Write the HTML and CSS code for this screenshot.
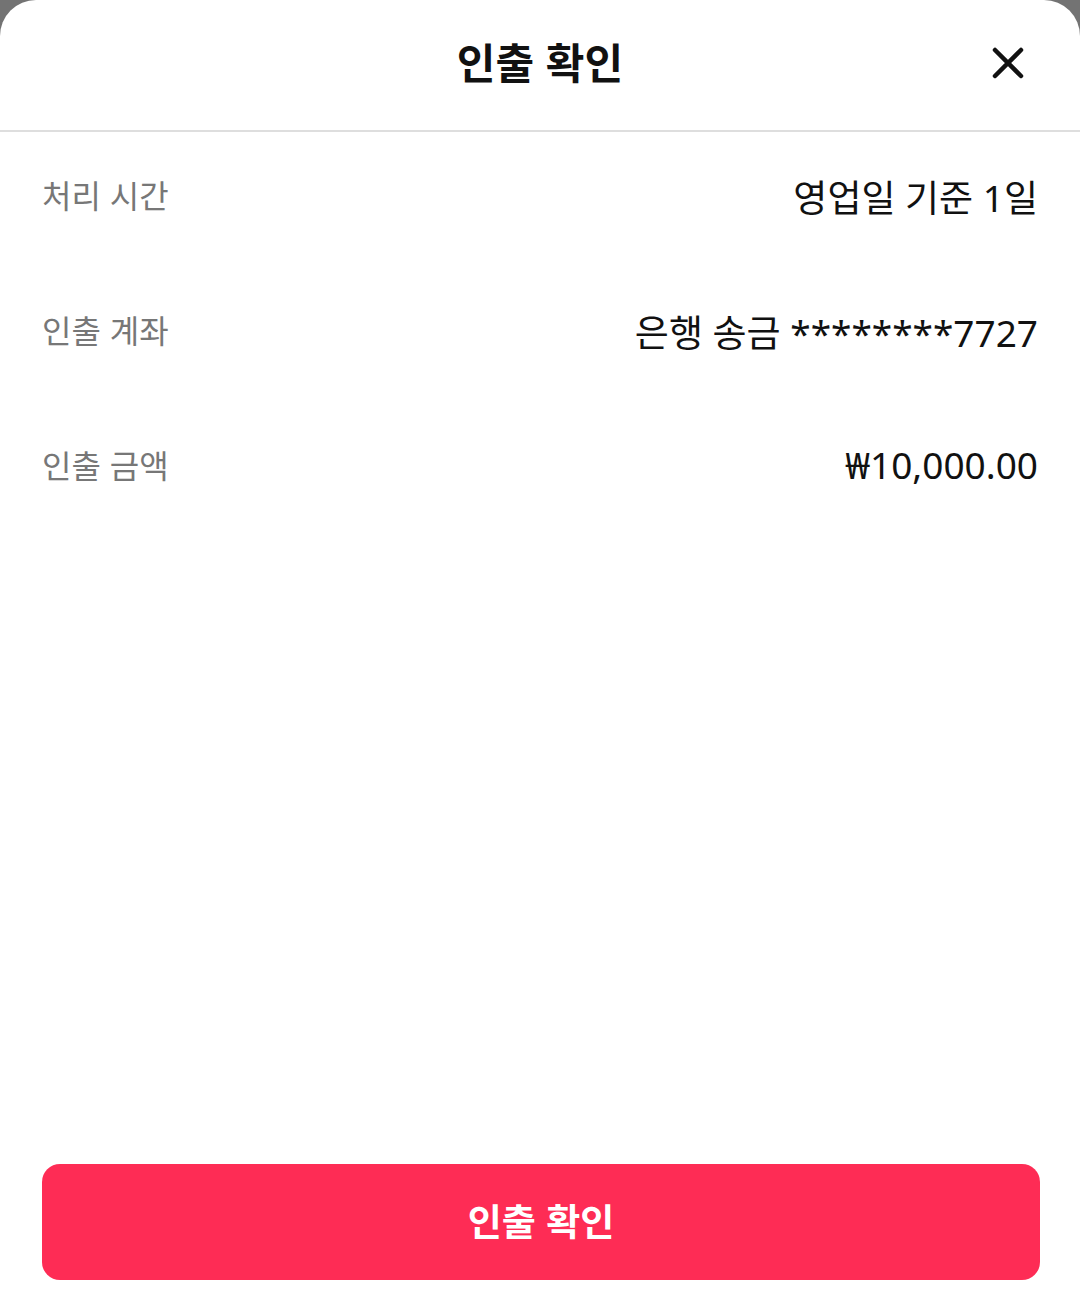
FILE: index.html
```html
<!DOCTYPE html>
<html lang="ko">
<head>
    <meta charset="UTF-8">
    <meta name="viewport" content="width=device-width, initial-scale=1.0">
    <title>인출 확인</title>
    <link rel="stylesheet" href="styles.css">
</head>
<body>

<div class="sheet">
    <!-- Header -->
    <div class="sheet-header">
        <h2>인출 확인</h2>
        <button type="button" class="close-btn" aria-label="닫기">
            <svg width="32" height="32" viewBox="0 0 32 32">
                <path d="M3 3 L29 29 M29 3 L3 29" stroke="#111" stroke-width="4.5" stroke-linecap="round"/>
            </svg>
        </button>
    </div>

    <!-- Details -->
    <div class="details">
        <div class="detail-row">
            <span class="label">처리 시간</span>
            <span class="value">영업일 기준 1일</span>
        </div>
        <div class="detail-row">
            <span class="label">인출 계좌</span>
            <span class="value">은행 송금 ********7727</span>
        </div>
        <div class="detail-row">
            <span class="label">인출 금액</span>
            <span class="value">₩10,000.00</span>
        </div>
    </div>

    <div class="footer">
        <button type="button" class="confirm-btn">인출 확인</button>
    </div>
</div>

</body>
</html>
```

FILE: styles.css
```css
body {
    font-family: 'Noto Sans CJK KR', 'Noto Sans', sans-serif;
    background-color: #737373;
    margin: 0;
    padding: 0;
}

.sheet {
    background-color: white;
    border-radius: 36px 36px 0 0;
    height: 1307px;
    display: flex;
    flex-direction: column;
}

.sheet-header {
    height: 130px;
    border-bottom: 2px solid #dedede;
    display: flex;
    align-items: center;
    justify-content: center;
    position: relative;
}

.sheet-header h2 {
    margin: 0 0 10px 0;
    font-size: 42px;
    font-weight: bold;
    color: #111;
}

.close-btn {
    position: absolute;
    right: 56px;
    top: 47px;
    background: none;
    border: none;
    padding: 0;
    width: 32px;
    height: 32px;
    cursor: pointer;
}

.close-btn svg {
    display: block;
}

.details {
    flex: 1;
    padding: 37px 42px 0 42px;
}

.detail-row {
    display: flex;
    justify-content: space-between;
    align-items: flex-start;
    height: 135px;
}

.label {
    font-size: 32px;
    color: #777;
    margin-top: 2px;
}

.value {
    font-family: 'Noto Sans', 'Noto Sans CJK KR', sans-serif;
    font-size: 37px;
    color: #111;
}

.footer {
    padding: 0 40px 27px 42px;
}

.confirm-btn {
    background-color: #fe2c55;
    color: white;
    border: none;
    border-radius: 18px;
    width: 100%;
    height: 116px;
    font-family: inherit;
    font-size: 37px;
    font-weight: bold;
    padding: 0 0 4px 0;
    cursor: pointer;
    display: block;
}
```
